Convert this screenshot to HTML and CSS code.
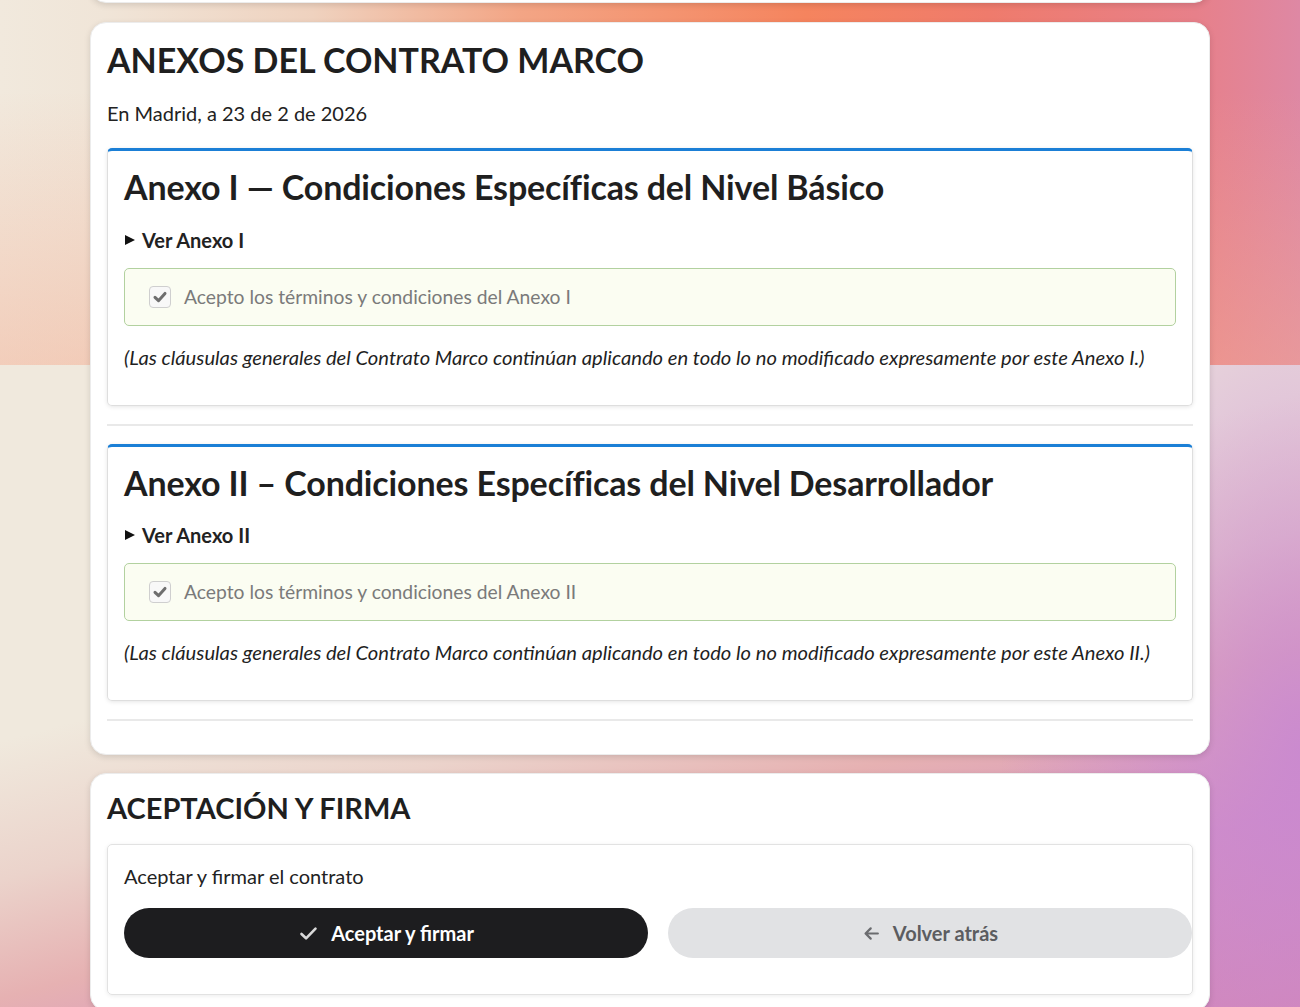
FILE: index.html
```html
<!DOCTYPE html>
<html lang="es">
<head>
    <meta charset="UTF-8">
    <title>Anexos del Contrato Marco</title>
    <link rel="stylesheet" href="styles.css">
</head>
<body>
    <main class="page">
        <!-- end of the previous section, scrolled out of view -->
        <section class="card card-prev"></section>

        <section class="card">
            <h2 class="card-title">ANEXOS DEL CONTRATO MARCO</h2>
            <p class="place-date">En Madrid, a 23 de 2 de 2026</p>

            <div class="annex">
                <h3>Anexo I — Condiciones Específicas del Nivel Básico</h3>
                <details>
                    <summary>Ver Anexo I</summary>
                    <p>Condiciones específicas aplicables a los clientes del Nivel Básico.</p>
                </details>
                <label class="accept">
                    <input type="checkbox" name="anexo1" checked disabled>
                    <span class="tick">
                        <svg viewBox="0 0 16 16" width="16" height="16"><path d="M3 8.3 L6.5 11.7 L13 4.4" fill="none" stroke="#6e6e6e" stroke-width="3" stroke-linecap="round" stroke-linejoin="round"/></svg>
                    </span>
                    Acepto los términos y condiciones del Anexo I
                </label>
                <p class="note">(Las cláusulas generales del Contrato Marco continúan aplicando en todo lo no modificado expresamente por este Anexo I.)</p>
            </div>
            <hr>

            <div class="annex">
                <h3>Anexo II – Condiciones Específicas del Nivel Desarrollador</h3>
                <details>
                    <summary>Ver Anexo II</summary>
                    <p>Condiciones específicas aplicables a los clientes del Nivel Desarrollador.</p>
                </details>
                <label class="accept">
                    <input type="checkbox" name="anexo2" checked disabled>
                    <span class="tick">
                        <svg viewBox="0 0 16 16" width="16" height="16"><path d="M3 8.3 L6.5 11.7 L13 4.4" fill="none" stroke="#6e6e6e" stroke-width="3" stroke-linecap="round" stroke-linejoin="round"/></svg>
                    </span>
                    Acepto los términos y condiciones del Anexo II
                </label>
                <p class="note">(Las cláusulas generales del Contrato Marco continúan aplicando en todo lo no modificado expresamente por este Anexo II.)</p>
            </div>
            <hr>
        </section>

        <section class="card">
            <h2 class="card-title small">ACEPTACIÓN Y FIRMA</h2>
            <div class="sign-box">
                <p class="sign-text">Aceptar y firmar el contrato</p>
                <div class="actions">
                    <button type="submit" class="btn btn-dark">
                        <svg viewBox="0 0 24 24" width="21" height="21"><path d="M4 12.5 L9.2 17.5 L20 6.5" fill="none" stroke="#d9d9d9" stroke-width="3" stroke-linecap="round" stroke-linejoin="round"/></svg>
                        Aceptar y firmar
                    </button>
                    <button type="button" class="btn btn-light">
                        <svg viewBox="0 0 24 24" width="19" height="19"><path d="M20 12 H5 M11 5.5 L4.5 12 L11 18.5" fill="none" stroke="#6b6c6f" stroke-width="2.8" stroke-linecap="round" stroke-linejoin="round"/></svg>
                        Volver atrás
                    </button>
                </div>
            </div>
        </section>
    </main>
</body>
</html>
```

FILE: styles.css
```css
html {
    min-height: 100%;
    scrollbar-width: none;
    background-color: #f0e9dd;
    background-image:
        linear-gradient(to bottom, rgba(244, 170, 140, 0) 25%, rgba(244, 172, 145, 0.45) 100%),
        linear-gradient(to right, #f1e9dd 0%, #f0e5d8 8%, #efd2bf 24%, #f3a585 40%, #f5845e 62%, #ef7b6c 76%, #e7808a 92%, #de88a4 100%),
        radial-gradient(ellipse 300px 600px at 100% 60%, rgba(200, 135, 210, 0.85), rgba(200, 135, 210, 0)),
        linear-gradient(165deg, #f0e9dd 38%, #ebd3cb 52%, #e6b1b2 64%, #d592c2 80%, #d688b0 100%);
    background-size: 100% 365px, 100% 365px, 100% 642px, 100% 642px;
    background-position: 0 0, 0 0, 0 365px, 0 365px;
    background-repeat: no-repeat;
}
body { margin: 0; font-family: Lato, "Noto Sans", Arial, sans-serif; color: #222; }

.page { width: 1120px; margin: 0 auto; }

.card {
    background: #fff;
    border: 1px solid #ececec;
    border-radius: 16px;
    box-shadow: 0 2px 6px rgba(0, 0, 0, 0.13);
    padding: 16px 16px 15px;
    margin-bottom: 18px;
}
.card-prev { height: 42px; margin-top: -41px; margin-bottom: 19px; padding: 0; }

.card-title { font-size: 34px; font-weight: 700; line-height: 1.2; margin: 1px 0 20px; color: #1f1f1f; }
.card-title.small { font-size: 29px; margin: 1px 0 18px; }

.place-date { font-size: 20px; line-height: 24px; margin: 0 0 23px; }

.annex {
    border: 1px solid #dedede;
    border-top: 3px solid #1b7fd6;
    border-radius: 5px;
    box-shadow: 0 1px 4px rgba(0, 0, 0, 0.1);
    padding: 16px;
}
.annex h3 {
    font-size: 34px; font-weight: 700; line-height: 1.2; letter-spacing: -0.14px;
    margin: 0 0 20px; color: #1f1f1f;
}

details { margin-bottom: 16px; }
summary {
    display: flex; align-items: center;
    font-size: 20px; font-weight: 700; line-height: 24px;
    cursor: pointer; list-style: none;
}
summary::-webkit-details-marker { display: none; }
summary::before {
    content: "";
    border-top: 5.5px solid transparent;
    border-bottom: 5.5px solid transparent;
    border-left: 10px solid #111;
    margin: 0 7px 0 1px;
}

.accept {
    display: flex; align-items: center; gap: 13px;
    padding: 16px 24px;
    border: 1px solid #b2d19f;
    border-radius: 5px;
    background: #fbfdf2;
    color: #7a7a7a;
    font-size: 19.3px; line-height: 24px;
}
.accept input { display: none; }
.tick {
    display: flex; align-items: center; justify-content: center;
    width: 20px; height: 20px;
    border: 1px solid #cfcfcf;
    border-radius: 4px;
    background: #f8f8f8;
}

.note { font-size: 20.2px; font-style: italic; line-height: 24px; margin: 19px 0 20px; color: #1f1f1f; }

hr { border: 0; border-top: 2px solid #e9e9e9; margin: 18px 0; }

.sign-box {
    border: 1px solid #e2e2e2;
    border-radius: 5px;
    box-shadow: 0 1px 4px rgba(0, 0, 0, 0.08);
    padding: 16px;
}
.sign-text { font-size: 20px; line-height: 30px; margin: 0 0 17px; }

.actions { display: flex; gap: 20px; width: 1068px; margin-bottom: 20px; }
.btn {
    flex: 0 0 524px; height: 50px;
    display: flex; align-items: center; justify-content: center; gap: 12px;
    border: 0; border-radius: 25px;
    font-family: inherit; font-size: 20px; font-weight: 700;
}
.btn-dark { background: #1d1d1f; color: #fff; }
.btn-light { background: #e1e2e4; color: #5c5d60; }
```
